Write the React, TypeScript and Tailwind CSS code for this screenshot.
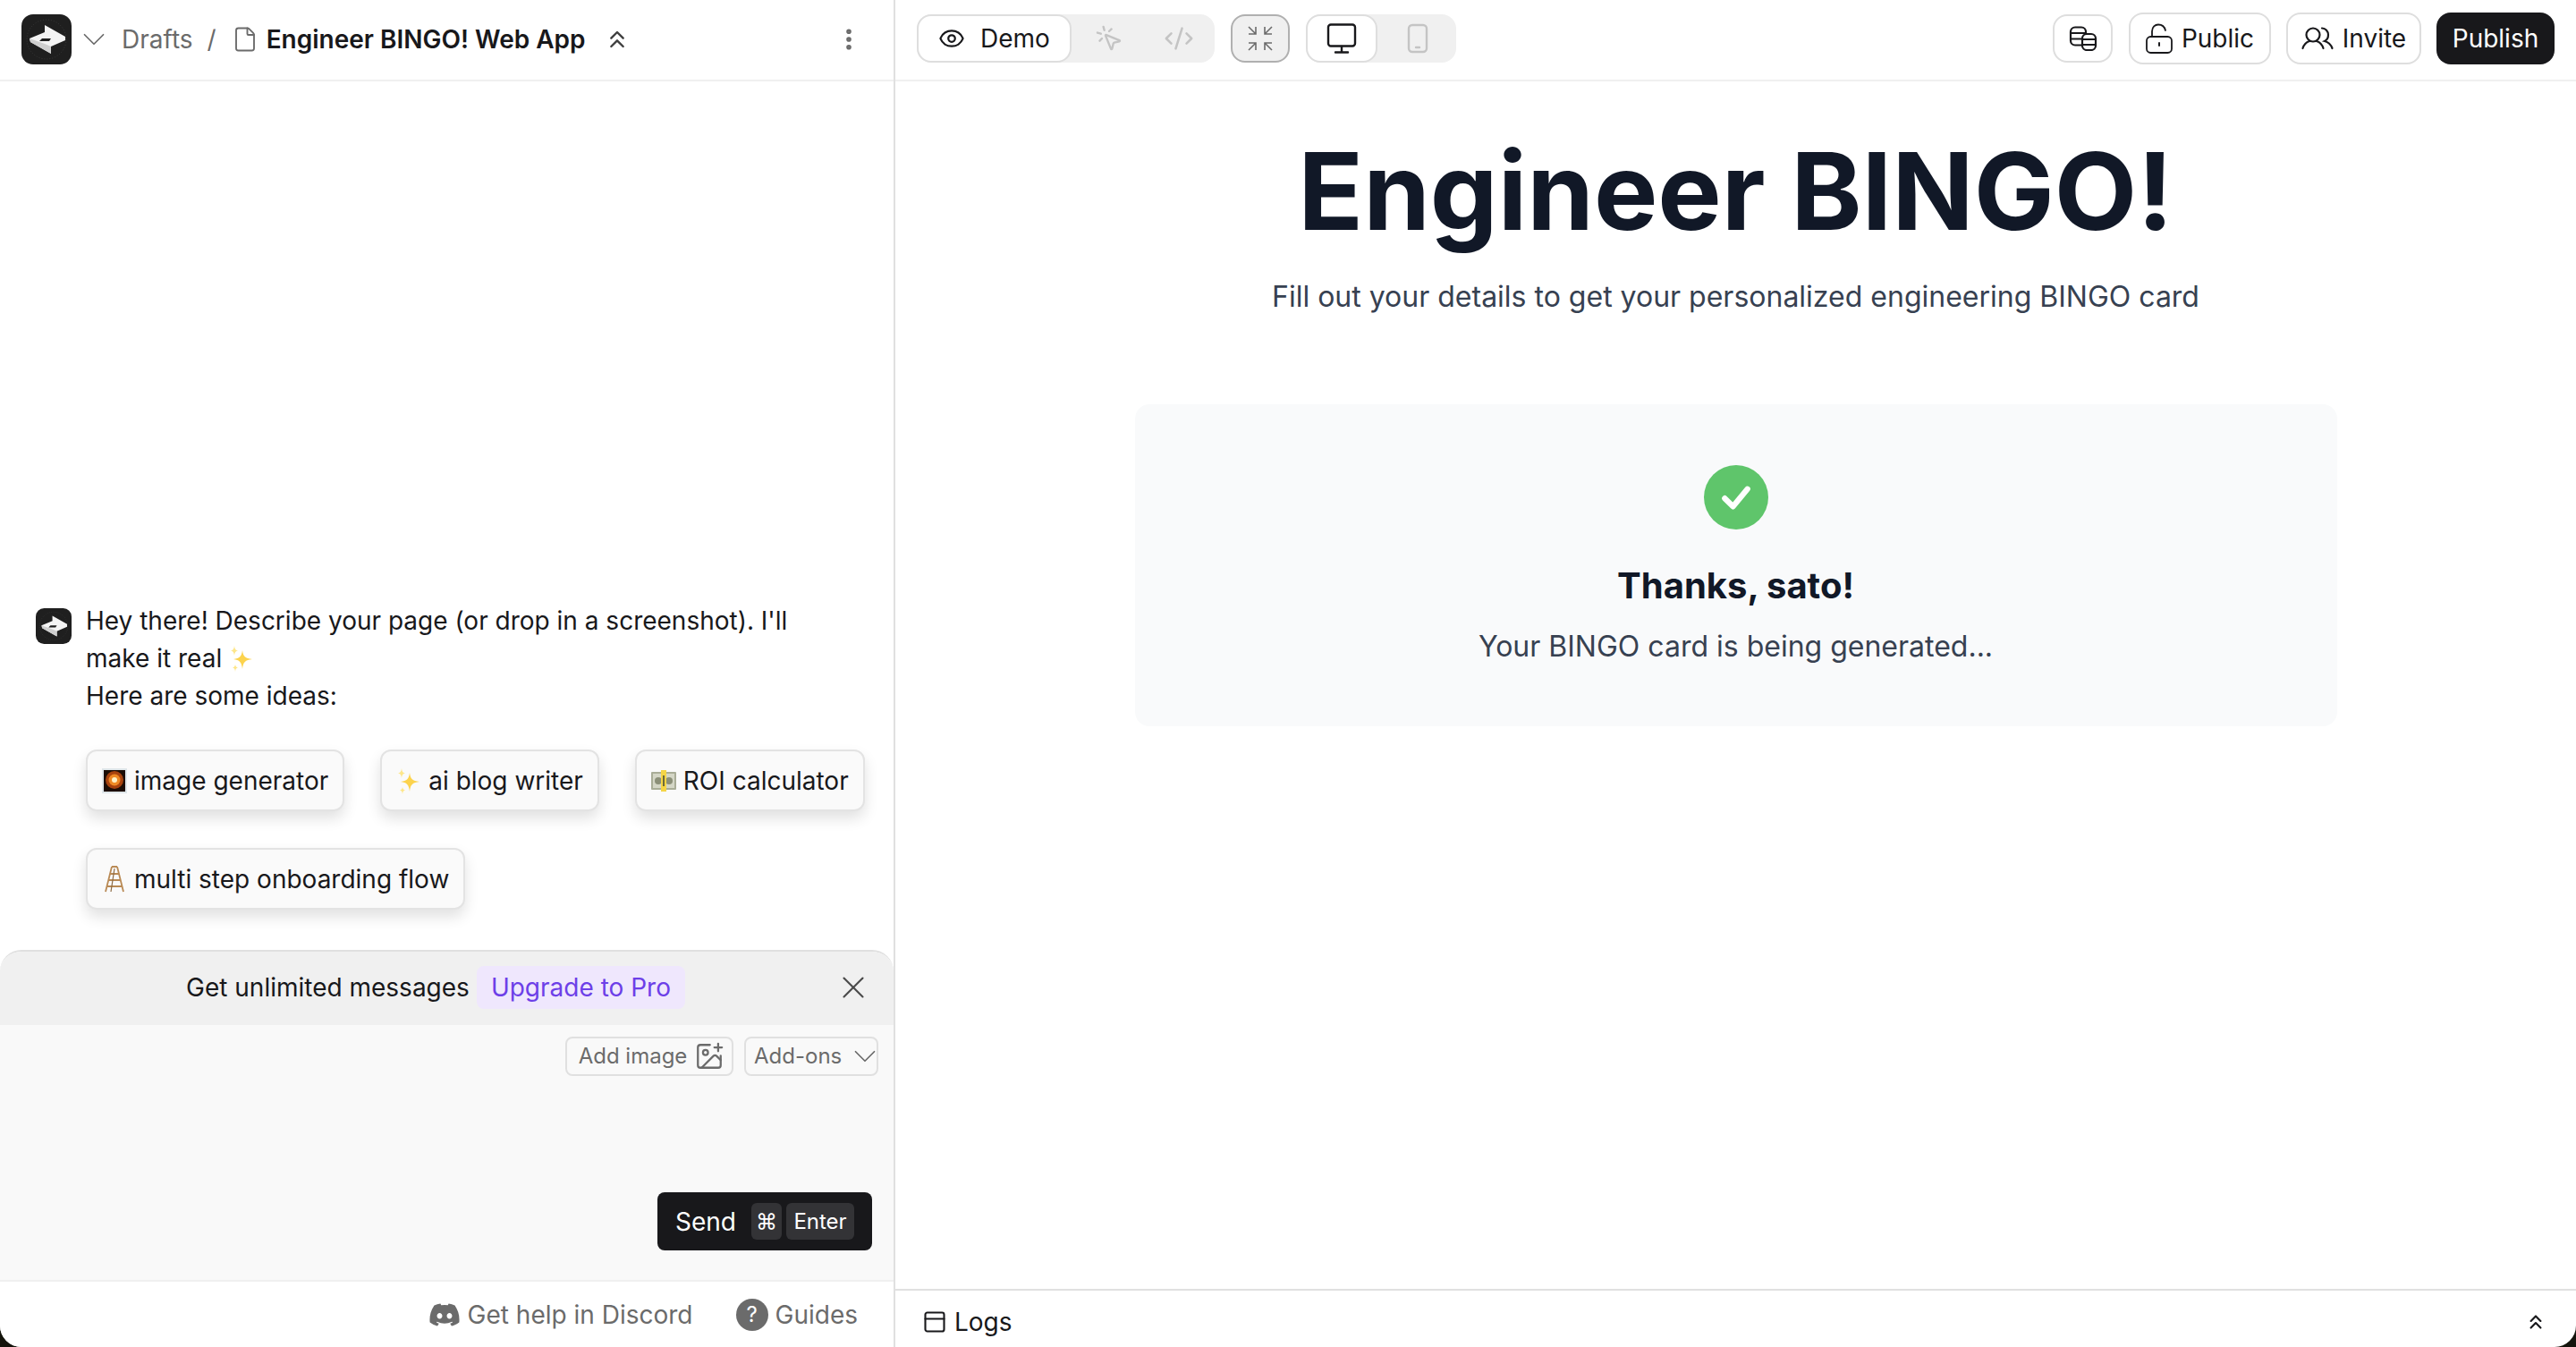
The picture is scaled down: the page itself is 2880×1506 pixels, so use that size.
import {
  ChevronDown,
  ChevronsUp,
  CodeXml,
  EllipsisVertical,
  Eye,
  File,
  ImagePlus,
  MousePointerClick,
  PanelTop,
  X,
} from "lucide-react";
import { FaDiscord } from "react-icons/fa";

const Logo = ({ size }: { size: number }) => (
  <svg width={size} height={size} viewBox="0 0 56 56" className="shrink-0">
    <rect width="56" height="56" rx="13" fill="#1f1f1f" />
    <circle cx="28" cy="28" r="22" fill="none" stroke="#4a4a4a" strokeWidth="0.6" strokeDasharray="1 2" />
    <path d="M9 27 L26 20 V12 L49 25 V29 L33 36 V44 L10 31 Z" fill="#f4f4f4" />
    <path d="M33 36 V44 L10 31 L9 27 L26 33 Z" fill="#cfcfcf" />
    <path d="M20 30 L23 27 H33 L31 30 Z" fill="#1f1f1f" />
  </svg>
);

const Sparkles = () => (
  <svg width="28" height="30" viewBox="0 0 28 30" className="inline-block shrink-0">
    <path d="M15 6 C16 13 18 15 26 16 C18 17 16 19 15 27 C14 19 12 17 5 16 C12 15 14 13 15 6 Z" fill="#fcd34d" />
    <path d="M6 1 C6.5 5 7.5 6 10 6.500 C7.500 7 6.500 8 6 12 C5.500 8 4.500 7 2 6.500 C4.500 6 5.500 5 6 1 Z" fill="#fde68a" />
    <path d="M7 22 C7.300 24 8 25 10 25.500 C8 26 7.300 27 7 30 C6.700 27 6 26 4 25.500 C6 25 6.700 24 7 22 Z" fill="#fde68a" />
  </svg>
);

const Fireworks = () => (
  <svg width="28" height="28" viewBox="0 0 28 28" className="shrink-0">
    <rect width="28" height="28" fill="#dfe6ea" />
    <rect x="2" y="2" width="24" height="24" fill="#1c0d05" />
    <circle cx="14" cy="13" r="10" fill="#a8430e" />
    <circle cx="14" cy="13" r="6.500" fill="#ef8a24" />
    <circle cx="14" cy="13" r="3" fill="#fff2c4" />
  </svg>
);

const Money = () => (
  <svg width="28" height="24" viewBox="0 0 28 24" className="shrink-0">
    <rect y="2" width="28" height="20" rx="1" fill="#a9ad97" />
    <rect x="2" y="4" width="24" height="16" fill="#d4d6c6" />
    <circle cx="8" cy="12" r="4" fill="#8b8f78" />
    <circle cx="20" cy="12" r="4" fill="#8b8f78" />
    <rect x="11" y="0" width="6" height="24" fill="#f5d547" />
    <rect x="13" y="6" width="2" height="12" fill="#6d6a3a" />
  </svg>
);

const Ladder = () => (
  <svg width="28" height="30" viewBox="-2 0 28 30" fill="none" stroke="#b98a55" strokeWidth="1.800" className="shrink-0">
    <path d="M9 1 L2 29 M15 1 L22 29 M9 1 H15 M7 9 H17 M5 16 H19 M4 23 H20" />
    <path d="M12 3 L8 29" stroke="#8c6a44" strokeWidth="1.200" />
  </svg>
);

const CompressIcon = () => (
  <svg width="28" height="28" viewBox="0 0 28 28" fill="none" stroke="currentColor" strokeWidth="1.600">
    <path d="M1 1 L9 9 M1 9 H9 V1" />
    <path d="M27 1 L19 9 M27 9 H19 V1" />
    <path d="M1 27 L9 19 M1 19 H9 V27" />
    <path d="M27 27 L19 19 M27 19 H19 V27" />
  </svg>
);

const DesktopIcon = () => (
  <svg width="34" height="34" viewBox="0 0 34 34" fill="none" stroke="currentColor" strokeWidth="2.400" strokeLinecap="round">
    <rect x="2" y="1.500" width="30" height="24" rx="3" />
    <path d="M17 26 V32 M10 32.500 H24" />
  </svg>
);

const PhoneIcon = () => (
  <svg width="24" height="34" viewBox="0 0 24 34" fill="none" stroke="currentColor" strokeWidth="2.400" strokeLinecap="round">
    <rect x="2" y="2" width="20" height="30" rx="4" />
    <path d="M10 27 H14" />
  </svg>
);

const CoinsIcon = () => (
  <svg width="32" height="28" viewBox="0 0 32 28" fill="none" stroke="currentColor" strokeWidth="2.200">
    <rect x="2" y="1.500" width="17" height="20" rx="5" />
    <path d="M2 8 H19 M2 14.500 H19" />
    <rect x="15" y="9" width="15" height="18" rx="5" fill="white" />
    <path d="M15 15 H30 M15 21 H30" />
  </svg>
);

const LockIcon = () => (
  <svg width="30" height="34" viewBox="0 0 30 34" fill="none" stroke="currentColor" strokeWidth="1.800" strokeLinecap="round">
    <rect x="1" y="15" width="28" height="18" rx="4.500" />
    <path d="M7 15 V9 C7 4 10.500 1.500 14 1.500 C18 1.500 21 4 22 8" />
    <path d="M15 22 V25" strokeWidth="2" />
  </svg>
);

const InviteIcon = () => (
  <svg width="36" height="26" viewBox="0 0 36 26" fill="none" stroke="currentColor" strokeWidth="2.200" strokeLinecap="round">
    <circle cx="13" cy="9" r="7.500" />
    <path d="M1.500 24 C3 19 6 17 9 16 M24.500 24 C23 19 20 17 17 16" />
    <path d="M23 1.500 C27 1.500 30 5 30 9 C30 12 28 15 26 16 C30 17 33 20 34.500 24" />
  </svg>
);

const ideas = [
  { label: "image generator", icon: <Fireworks /> },
  { label: "ai blog writer", icon: <Sparkles /> },
  { label: "ROI calculator", icon: <Money /> },
  { label: "multi step onboarding flow", icon: <Ladder /> },
];

const Header = () => (
  <div className="flex h-[91px] shrink-0 items-center border-b-2 border-[#f0f0f0] pb-px pl-6 pr-[35px]">
    <Logo size={56} />
    <ChevronDown size={42} strokeWidth={1} className="ml-1 text-[#6b6b6b]" />
    <span className="ml-[10px] text-[28px] text-[#6b6b6b]">Drafts</span>
    <span className="ml-4 text-[28px] text-[#6b6b6b]">/</span>
    <File size={30} strokeWidth={1.500} className="ml-[17px] text-[#6b6b6b]" />
    <span className="ml-[9px] text-[28px] font-semibold text-[#18181b]">Engineer BINGO! Web App</span>
    <ChevronsUp size={32} strokeWidth={1.800} className="ml-[19px] text-[#3f3f3f]" />
    <EllipsisVertical size={30} strokeWidth={2.500} className="ml-auto text-[#6b6b6b]" />
  </div>
);

const Chat = () => (
  <div className="flex min-h-0 flex-1 flex-col justify-end pb-[45px] pl-10 pr-4">
    <div className="flex gap-4">
      <div className="pt-[7px]">
        <Logo size={40} />
      </div>
      <div className="min-w-0 flex-1">
        <div className="w-[810px] text-[28px] leading-[42px] text-[#18181b]">
          <p>Hey there! Describe your page (or drop in a screenshot). I'll</p>
          <p className="flex items-center gap-2">
            make it real <Sparkles />
          </p>
          <p>Here are some ideas:</p>
        </div>
        <div className="mt-[39px] flex flex-wrap gap-x-10 gap-y-[41px]">
          {ideas.map((idea) => (
            <div
              key={idea.label}
              className="flex h-[69px] items-center gap-[8px] rounded-xl border-2 border-[#e3e3e3] bg-[#fafafa] px-4 text-[28px] text-[#18181b] shadow-[0_8px_16px_rgba(0,0,0,0.12)]"
            >
              {idea.icon}
              <span>{idea.label}</span>
            </div>
          ))}
        </div>
      </div>
    </div>
  </div>
);

const Composer = () => (
  <div className="shrink-0 overflow-hidden rounded-t-3xl border-t-2 border-[#e0e0e0]">
    <div className="relative flex h-[82px] items-center justify-center bg-[#f0f0f0] pb-[2px] pr-[25px] text-[28px] text-[#18181b]">
      <span>Get unlimited messages</span>
      <span className="ml-2 flex h-[48px] items-center rounded-lg bg-[#efe7fd] px-4 text-[#6d3fe8]">Upgrade to Pro</span>
      <X size={42} strokeWidth={1.200} className="absolute right-[24px] top-[19px] text-[#4a4a4a]" />
    </div>
    <div className="flex h-[285px] flex-col bg-[#f9f9f9] pb-[33px] pl-4 pr-[17px] pt-[13px]">
      <div className="flex justify-end gap-3">
        <div className="flex h-[44px] w-[188px] items-center justify-center gap-2 rounded-lg border-2 border-[#e0e0e0] pl-[5px] text-[24px] text-[#6b6b6b]">
          Add image <ImagePlus size={34} strokeWidth={1.600} />
        </div>
        <div className="flex h-[44px] w-[150px] items-center rounded-lg border-2 border-[#e0e0e0] pl-[9px] text-[24px] text-[#6b6b6b]">
          <span className="whitespace-nowrap">Add-ons</span>
          <ChevronDown size={42} strokeWidth={1} className="ml-[5px] shrink-0" />
        </div>
      </div>
      <div className="mt-auto flex justify-end pr-[7px]">
        <div className="flex h-[65px] w-[240px] items-center justify-between rounded-lg bg-[#18181b] pl-5 pr-5 text-[28px] text-white">
          <span>Send</span>
          <div className="flex gap-[5px] text-[24px]">
            <span className="flex h-[41px] w-[34px] items-center justify-center rounded-md bg-[#333336]">⌘</span>
            <span className="flex h-[41px] w-[76px] items-center justify-center rounded-md bg-[#333336]">Enter</span>
          </div>
        </div>
      </div>
    </div>
  </div>
);

const ChatFooter = () => (
  <div className="flex h-[75px] shrink-0 items-center justify-end gap-[48px] border-t-2 border-[#f0f0f0] bg-white pr-10 text-[28px] text-[#6b6b6b]">
    <div className="flex items-center gap-[8px]">
      <FaDiscord size={36} />
      <span>Get help in Discord</span>
    </div>
    <div className="flex items-center gap-[8px]">
      <span className="flex h-[36px] w-[36px] items-center justify-center rounded-full bg-[#6b6b6b] text-[24px] text-white">?</span>
      <span>Guides</span>
    </div>
  </div>
);

const Toolbar = () => (
  <div className="flex h-[91px] shrink-0 items-center border-b-2 border-[#f0f0f0] pb-[3px] pl-6 pr-6">
    <div className="flex h-[54px] w-[333px] items-center rounded-2xl bg-[#f0f0f0]">
      <div className="flex h-[54px] w-[173px] items-center justify-center gap-[17px] rounded-2xl border-2 border-[#dedede] bg-white text-[28px] text-[#18181b]">
        <Eye size={30} strokeWidth={1.800} />
        <span>Demo</span>
      </div>
      <MousePointerClick size={32} strokeWidth={1.800} className="ml-[26px] text-[#c4c4c4]" />
      <CodeXml size={34} strokeWidth={1.800} className="ml-[45px] text-[#c4c4c4]" />
    </div>
    <div className="ml-[18px] flex h-[54px] w-[66px] items-center justify-center rounded-2xl border-2 border-[#b0b0b0] bg-[#f0f0f0] text-[#6b6b6b]">
      <CompressIcon />
    </div>
    <div className="ml-[18px] flex h-[54px] w-[168px] items-center rounded-2xl bg-[#f0f0f0]">
      <div className="flex h-[54px] w-[80px] items-center justify-center rounded-2xl border-2 border-[#dedede] bg-white text-[#18181b]">
        <DesktopIcon />
      </div>
      <div className="ml-[33px] text-[#c4c4c4]">
        <PhoneIcon />
      </div>
    </div>
    <div className="ml-auto flex items-center gap-[17px] text-[28px] text-[#18181b]">
      <div className="mr-px flex h-[54px] w-[67px] items-center justify-center rounded-2xl border-2 border-[#dedede]">
        <CoinsIcon />
      </div>
      <div className="flex h-[58px] w-[159px] items-center justify-center gap-[10px] rounded-2xl border-2 border-[#dedede]">
        <LockIcon />
        <span>Public</span>
      </div>
      <div className="flex h-[58px] w-[151px] items-center justify-center gap-[10px] rounded-2xl border-2 border-[#dedede]">
        <InviteIcon />
        <span>Invite</span>
      </div>
      <div className="flex h-[58px] w-[132px] items-center justify-center rounded-2xl bg-[#18181b] text-white">Publish</div>
    </div>
  </div>
);

const Preview = () => (
  <div className="flex min-h-0 flex-1 flex-col items-center pt-[57px]">
    <h1 className="text-[120px] font-bold leading-[132px] text-[#111827]">Engineer BINGO!</h1>
    <p className="mt-[32px] text-[32px] leading-[40px] text-[#374151]">Fill out your details to get your personalized engineering BINGO card</p>
    <div className="mt-[100px] flex h-[360px] w-[1344px] flex-col items-center rounded-2xl bg-[#f9fafb] pt-[68px]">
      <div className="flex h-[72px] w-[72px] items-center justify-center rounded-full bg-[#5fc56b] text-white">
        <svg width="46" height="46" viewBox="0 0 40 40" fill="none" stroke="currentColor" strokeWidth="5.500" strokeLinecap="round" strokeLinejoin="round">
          <path d="M9 21 L17 29 L31 12" />
        </svg>
      </div>
      <h2 className="mt-[38px] text-[40px] font-bold leading-[50px] text-[#111827]">Thanks, sato!</h2>
      <p className="mt-[18px] text-[32px] leading-[50px] text-[#374151]">Your BINGO card is being generated...</p>
    </div>
  </div>
);

const LogsBar = () => (
  <div className="flex h-[65px] shrink-0 items-center border-t-2 border-[#e0e0e0] pl-[30px] pr-[32px] pt-[7px] text-[28px] text-[#18181b]">
    <PanelTop size={28} strokeWidth={1.800} />
    <span className="ml-[8px]">Logs</span>
    <ChevronsUp size={26} strokeWidth={2} className="ml-auto" />
  </div>
);

export default function App() {
  return (
    <div className="h-[1506px] w-[2880px] bg-[#14140c] font-['Inter',sans-serif]">
      <div className="flex h-full overflow-hidden rounded-b-3xl bg-white">
        <div className="flex w-[999px] shrink-0 flex-col">
          <Header />
          <Chat />
          <Composer />
          <ChatFooter />
        </div>
        <div className="flex min-w-0 flex-1 flex-col border-l-2 border-[#e0e0e0]">
          <Toolbar />
          <Preview />
          <LogsBar />
        </div>
      </div>
    </div>
  );
}
